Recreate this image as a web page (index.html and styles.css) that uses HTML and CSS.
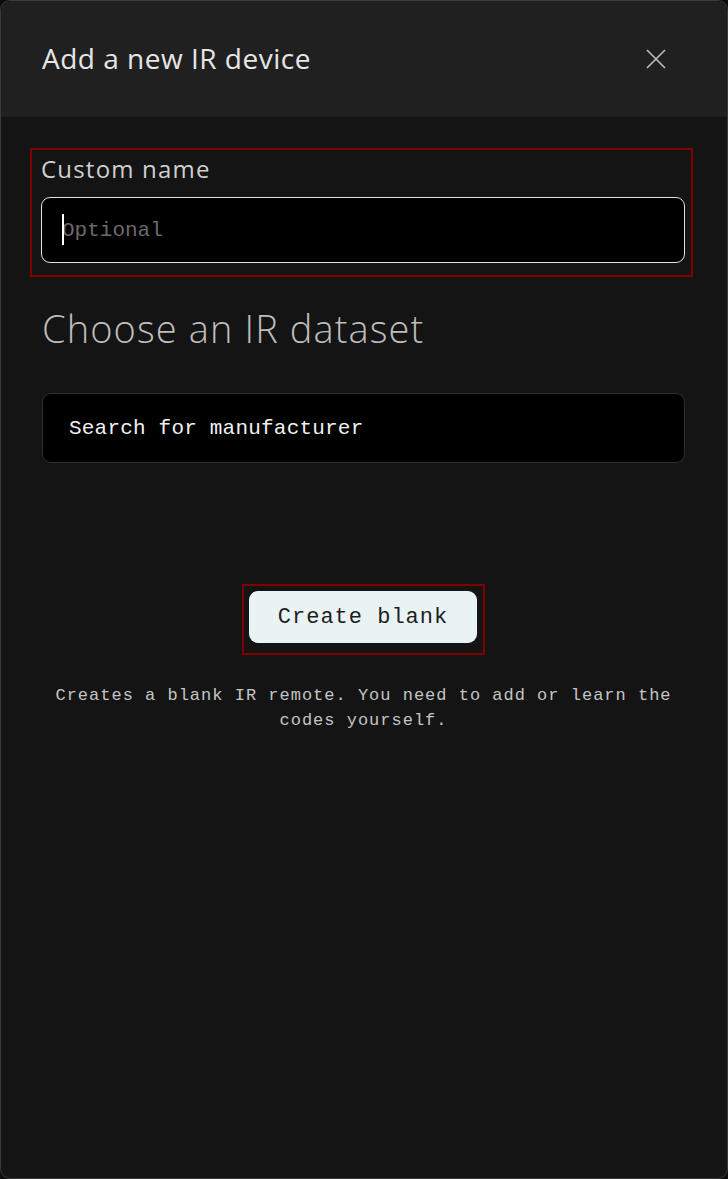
FILE: index.html
```html
<!DOCTYPE html>
<html>
<head>
<meta charset="utf-8">
<link rel="stylesheet" href="styles.css">
</head>
<body>
<div class="modal">
  <div class="header">
    <h1 class="title">Add a new IR device</h1>
    <button class="close" aria-label="Close">
      <svg width="20" height="20" viewBox="0 0 20 20"><path d="M1 1 L19 19 M19 1 L1 19" stroke="#bdbdbd" stroke-width="1.6" fill="none"/></svg>
    </button>
  </div>
  <div class="content">
    <div class="field hl">
      <label class="label">Custom name</label>
      <div class="input"><span class="caret"></span><span class="placeholder">Optional</span></div>
    </div>
    <h2 class="section">Choose an IR dataset</h2>
    <div class="search">Search for manufacturer</div>
    <div class="actions">
      <div class="hl btnwrap"><button class="blank">Create blank</button></div>
    </div>
    <p class="desc">Creates a blank IR remote. You need to add or learn the codes yourself.</p>
  </div>
</div>
</body>
</html>
```
FILE: styles.css
```css
html, body { margin: 0; padding: 0; background: #0c0c0c; }
.modal {
  height: 1179px;
  box-sizing: border-box;
  border: 1px solid #3a3a3a;
  border-radius: 10px;
  overflow: hidden;
  background: #141414;
  display: flex;
  flex-direction: column;
  font-family: "Open Sans", sans-serif;
}
.header {
  height: 116px;
  flex: none;
  background: #202020;
  display: flex;
  align-items: center;
  justify-content: space-between;
  padding: 0 61px 0 41px;
}
.title {
  margin: 0 0 2px;
  font-size: 28px;
  line-height: 38px;
  font-weight: 400;
  color: #e6e6e6;
  letter-spacing: 0.5px;
}
.close {
  background: none; border: 0; padding: 0; width: 20px; height: 20px; display: flex;
}
.content { padding: 31px 34px 0 29px; display: flex; flex-direction: column; }
.hl { border: 2px solid #800000; }
.field { padding: 3px 6px 12px 9px; display: flex; flex-direction: column; }
.label { font-size: 24px; color: #cfcfcf; line-height: 32px; margin-bottom: 12px; letter-spacing: 1.2px; }
.input {
  height: 64px;
  border: 1px solid #e0e0e0;
  border-radius: 9px;
  background: #000;
  display: flex;
  align-items: center;
  padding-left: 20px;
  position: relative;
}
.caret { width: 2px; height: 31px; background: #fff; position: absolute; left: 20px; top: 16px; }
.placeholder { font-family: "Liberation Mono", monospace; font-size: 21px; color: #6a6a6a; }
.section {
  margin: 26px 8px 0 12px;
  font-size: 38px;
  font-weight: 300;
  color: #bdbdbd;
  line-height: 50px;
  letter-spacing: 1.1px;
}
.search {
  margin: 40px 8px 0 12px;
  height: 68px;
  border: 1px solid #2e2e2e;
  border-radius: 9px;
  background: #000;
  display: flex;
  align-items: center;
  padding-left: 26px;
  font-family: "Liberation Mono", monospace;
  font-size: 21px;
  letter-spacing: 0.2px;
  color: #f0f0f0;
}
.actions { display: flex; justify-content: center; margin: 121px 8px 0 12px; }
.btnwrap { padding: 5px 6px 10px 5px; display: flex; }
.blank {
  width: 228px;
  height: 52px;
  border: 0;
  border-radius: 9px;
  background: #eaf3f4;
  color: #1e1e1e;
  font-family: "Liberation Mono", monospace;
  font-size: 22px;
  letter-spacing: 1px;
  padding: 0;
}
.desc {
  margin: 28px 8px 0 12px;
  text-align: center;
  font-family: "Liberation Mono", monospace;
  font-size: 17px;
  letter-spacing: 1px;
  line-height: 25px;
  color: #c4c4c4;
}
```
